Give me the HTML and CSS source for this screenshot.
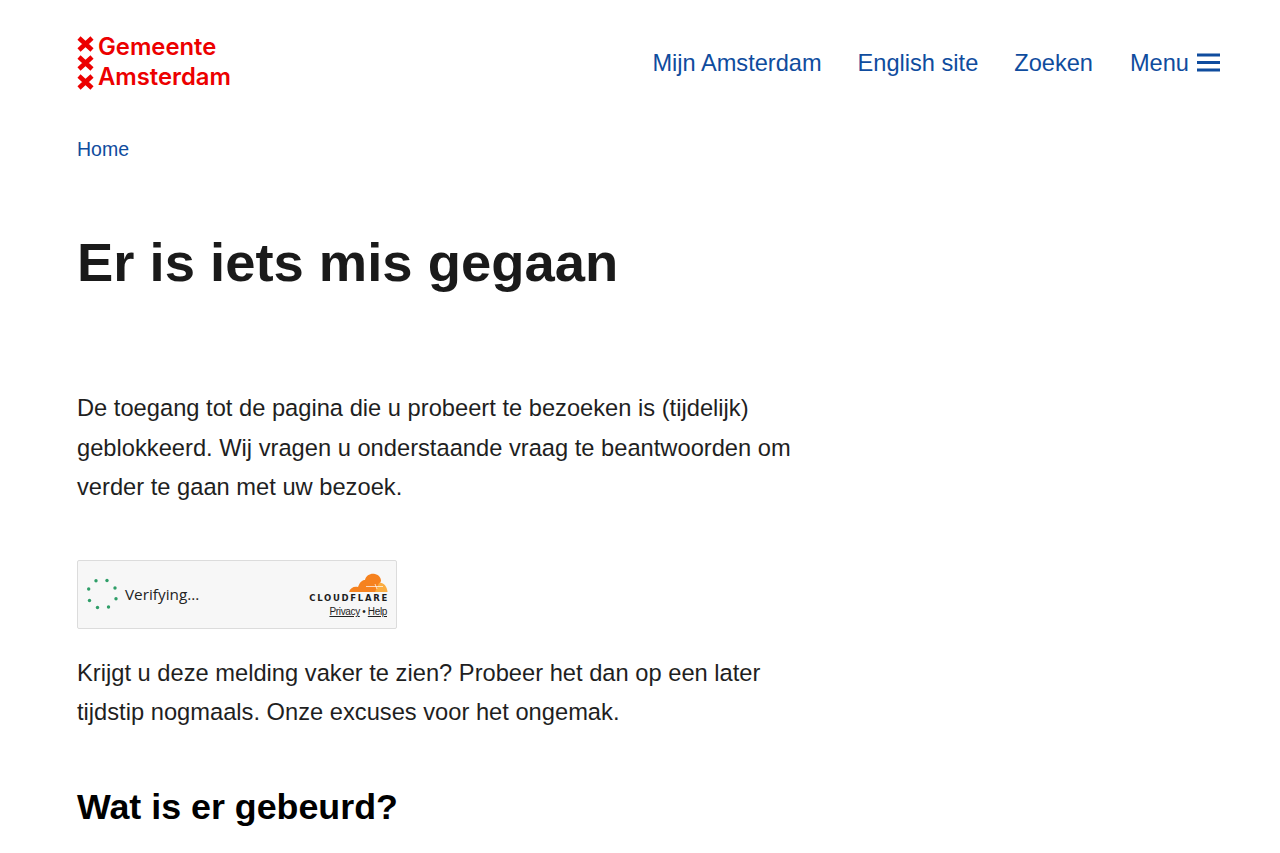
FILE: index.html
```html
<!DOCTYPE html>
<html lang="nl">
<head>
    <meta charset="UTF-8">
    <title>Er is iets mis gegaan</title>
    <link rel="stylesheet" href="styles.css">
</head>
<body>

<!--header met logo en navigatie-->
<header class="header">
    <a class="logo" href="#">
        <svg class="logo-marks" width="17" height="54" viewBox="0 0 17 54">
            <path d="M2 2 L15 14 M15 2 L2 14 M2 21 L15 33 M15 21 L2 33 M2 40 L15 52 M15 40 L2 52" stroke="#ec0000" stroke-width="4.6" fill="none"/>
        </svg>
        <span class="logo-text">Gemeente<br>Amsterdam</span>
    </a>
    <nav class="nav">
        <a href="#">Mijn Amsterdam</a>
        <a href="#">English site</a>
        <a href="#">Zoeken</a>
        <a class="menu" href="#">Menu
            <svg width="23" height="19" viewBox="0 0 23 19">
                <path d="M0 2 H23 M0 9.500 H23 M0 17 H23" stroke="#0f4c9e" stroke-width="3" fill="none"/>
            </svg>
        </a>
    </nav>
</header>

<main class="main">
    <a class="crumb" href="#">Home</a>
    <h1>Er is iets mis gegaan</h1>
    <p class="intro">De toegang tot de pagina die u probeert te bezoeken is (tijdelijk) geblokkeerd. Wij vragen u onderstaande vraag te beantwoorden om verder te gaan met uw bezoek.</p>

    <!--captcha blok-->
    <div class="widget">
        <div class="verify">
            <svg width="34" height="34" viewBox="0 0 34 34">
                <g fill="#2f9e68">
                    <circle cx="11" cy="3.700" r="1.700"/>
                    <circle cx="22" cy="3.500" r="1.700"/>
                    <circle cx="30" cy="11" r="1.700"/>
                    <circle cx="31" cy="21.700" r="1.700"/>
                    <circle cx="23.500" cy="30" r="1.700"/>
                    <circle cx="12.500" cy="30.500" r="1.700"/>
                    <circle cx="4.500" cy="23.500" r="1.700"/>
                    <circle cx="3.700" cy="12" r="1.700"/>
                </g>
            </svg>
            <span>Verifying...</span>
        </div>
        <div class="brand">
            <svg width="40" height="19" viewBox="0 0 40 19">
                <path d="M1 19 C2 15 6 13 10 14 C12 9 14 7 17 7 C18 2 23 0 27 1 C31 2 33 5 33 8 L28 19 Z" fill="#f6821f"/>
                <path d="M27 19 L31 10 C35 9 39 13 39.500 19 Z" fill="#fbad41"/>
                <path d="M18 13.500 H35 M27 11 L29 16" stroke="#fff" stroke-width="0.700"/>
            </svg>
            <div class="wordmark">CLOUDFLARE</div>
            <div class="links"><a href="#">Privacy</a> • <a href="#">Help</a></div>
        </div>
    </div>

    <p class="after">Krijgt u deze melding vaker te zien? Probeer het dan op een later tijdstip nogmaals. Onze excuses voor het ongemak.</p>
    <h2>Wat is er gebeurd?</h2>
    <p class="last">Onze server heeft veel verzoeken vanaf uw apparaat ontvangen.</p>
</main>

</body>
</html>
```

FILE: styles.css
```css
* {
    margin: 0;
    padding: 0;
    box-sizing: border-box;
}

body {
    font-family: "Liberation Sans", Arial, sans-serif;
    color: #1f1f1f;
    background-color: #fff;
}

a {
    color: #0f4c9e;
    text-decoration: none;
}

.header {
    display: flex;
    justify-content: space-between;
    align-items: center;
    height: 125px;
    padding: 0 60px 0 77px;
}

.logo {
    display: flex;
    align-items: center;
    gap: 4px;
}

.logo-text {
    font-family: "Inter", sans-serif;
    font-size: 23.800px;
    font-weight: 600;
    line-height: 30px;
    margin-bottom: 2px;
    color: #ec0000;
}

.nav {
    display: flex;
    align-items: center;
    gap: 36px;
    margin-top: 1px;
    font-size: 23.600px;
}

.menu {
    display: flex;
    align-items: center;
    gap: 8px;
    margin-left: 1px;
}

.menu svg {
    margin-bottom: 2px;
}

.main {
    padding: 0 77px;
}

.crumb {
    display: block;
    font-size: 19.500px;
    line-height: 24px;
    margin-top: 12px;
}

h1 {
    font-size: 54.400px;
    line-height: 64px;
    font-weight: 700;
    color: #1a1a1a;
    margin-top: 70px;
}

.intro,
.after,
.last {
    width: 740px;
    font-size: 23.700px;
    line-height: 39.700px;
}

.intro {
    margin-top: 94px;
}

.widget {
    display: flex;
    justify-content: space-between;
    align-items: center;
    width: 320px;
    height: 69px;
    margin-top: 51.400px;
    padding: 0 8px 0 7px;
    background-color: #f7f7f7;
    border: 1px solid #dcdcdc;
    border-radius: 2px;
}

.verify {
    display: flex;
    align-items: center;
    gap: 6px;
    font-family: "Open Sans", sans-serif;
    font-size: 15.300px;
    color: #232323;
}

.brand {
    display: flex;
    flex-direction: column;
    align-items: flex-end;
    padding-top: 3px;
}

.wordmark {
    font-family: "DejaVu Sans", sans-serif;
    font-size: 8.500px;
    font-weight: 700;
    letter-spacing: 1.700px;
    line-height: 11px;
    margin-top: 1.500px;
    margin-right: -1px;
    color: #1d1d1d;
}

.links {
    font-size: 10px;
    letter-spacing: -0.350px;
    line-height: 12px;
    margin-top: 2px;
    margin-right: 1px;
    color: #232323;
}

.links a {
    color: #232323;
    text-decoration: underline;
}

.after {
    margin-top: 25px;
}

h2 {
    font-size: 35.800px;
    line-height: 44px;
    font-weight: 700;
    color: #000;
    margin-top: 52px;
}

.last {
    margin-top: 14px;
}
```
